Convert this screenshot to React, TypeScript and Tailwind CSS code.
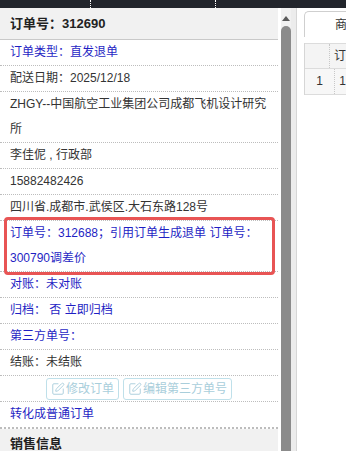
import React from "react";
import { SquarePen } from "lucide-react";

type Row = { lines: string[]; tone: "dark" | "blue" };

const ROWS: Row[] = [
  { lines: ["订单类型：直发退单"], tone: "blue" },
  { lines: ["配送日期：2025/12/18"], tone: "dark" },
  { lines: ["ZHGY--中国航空工业集团公司成都飞机设计研究", "所"], tone: "dark" },
  { lines: ["李佳伲 , 行政部"], tone: "dark" },
  { lines: ["15882482426"], tone: "dark" },
  { lines: ["四川省.成都市.武侯区.大石东路128号"], tone: "dark" },
  { lines: ["订单号：312688；引用订单生成退单 订单号：", "300790调差价"], tone: "blue" },
  { lines: ["对账：未对账"], tone: "blue" },
  { lines: ["归档： 否 立即归档"], tone: "blue" },
  { lines: ["第三方单号："], tone: "blue" },
  { lines: ["结账：未结账"], tone: "dark" },
];

const font = { fontFamily: '"Liberation Sans", "Noto Sans CJK SC", sans-serif' };

function InfoRow({ row }: { row: Row }) {
  return (
    <div
      className={`border-b border-dotted border-[#bdbdbd] pl-[10px] text-[12px] leading-[25px] ${
        row.tone === "blue" ? "text-[#1f1fc4]" : "text-[#333]"
      }`}
    >
      {row.lines.map((l, i) => (
        <div key={i} className="whitespace-nowrap">
          {l}
        </div>
      ))}
    </div>
  );
}

function GhostButton({ label }: { label: string }) {
  return (
    <button
      type="button"
      className="flex h-[22px] items-center gap-[1px] rounded-[3px] border border-[#bfe0ea] bg-white px-[4px] text-[12px] text-[#a9cedb]"
    >
      <SquarePen className="h-[14px] w-[14px]" strokeWidth={1.6} />
      {label}
    </button>
  );
}

export default function App() {
  return (
    <div className="h-[451px] w-[346px] overflow-hidden bg-white" style={font}>
      {/* top dark strip */}
      <div className="flex h-[8px] bg-[#22252c]">
        <div className="w-[90px]" />
        <div className="w-[125px] border-l border-dotted border-white" />
        <div className="w-[90px] border-l border-dotted border-white" />
        <div className="flex-1" />
      </div>

      <div className="flex h-[443px]">
        {/* left detail panel */}
        <div className="relative w-[278px] shrink-0">
          <div className="h-[32px] border-b border-[#c9c9c9] bg-[#f1f1f1] pl-[10px] text-[13px] font-bold leading-[31px] text-[#222]">
            订单号：312690
          </div>
          {ROWS.map((r, i) => (
            <InfoRow key={i} row={r} />
          ))}
          <div className="flex h-[26px] items-center justify-center gap-[4px] border-b border-dotted border-[#bdbdbd]">
            <GhostButton label="修改订单" />
            <GhostButton label="编辑第三方单号" />
          </div>
          <div className="border-b-2 border-dotted border-[#bdbdbd] pl-[10px] text-[12px] leading-[25px] text-[#1f1fc4]">
            转化成普通订单
          </div>
          <div className="h-[30px] bg-[#f1f1f1] pl-[10px] text-[13px] font-bold leading-[30px] text-[#222]">
            销售信息
          </div>

          {/* highlight annotation */}
          <div className="absolute left-[4px] top-[209px] h-[58px] w-[271px] rounded-[4px] border-[3px] border-[#e85454]" />
        </div>

        {/* scrollbar */}
        <div className="ml-[3px] flex w-[10px] shrink-0 flex-col items-center bg-[#f1f1f1]">
          <svg width="10" height="18" viewBox="0 0 10 18" className="shrink-0">
            <path d="M5 8 L9 13 L1 13 Z" fill="#5a5a5a" />
          </svg>
          <div className="w-full flex-1 rounded-t-[5px] bg-[#8b8b8b]" />
        </div>

        <div className="w-[5px] shrink-0 bg-[#ececec]" />
        <div className="w-[1px] shrink-0 bg-[#d6d6d6]" />

        {/* right panel */}
        <div className="flex-1 overflow-hidden pl-[7px] pt-[3px]">
          <div className="flex h-[26px] w-[60px] items-center rounded-tl-[5px] border-l border-t border-[#cfcfcf] bg-white text-[12px] text-[#333]">
            <span className="pl-[30px]">商</span>
          </div>
          <div className="mt-[6px] border-l border-[#d6d6d6]">
            <div className="flex h-[26px] border-b border-t border-[#dcdcdc] bg-[#f4f4f4] text-[12px] leading-[25px] text-[#333]">
              <div className="w-[32px] border-r border-dotted border-[#c8c8c8]" />
              <div className="pl-[4px]">订</div>
            </div>
            <div className="flex h-[26px] border-b border-[#dcdcdc] bg-[#f7f7f7] text-[12px] leading-[25px] text-[#333]">
              <div className="w-[32px] border-r border-dotted border-[#c8c8c8] text-center">1</div>
              <div className="pl-[4px]">1</div>
            </div>
          </div>
        </div>
      </div>
    </div>
  );
}
